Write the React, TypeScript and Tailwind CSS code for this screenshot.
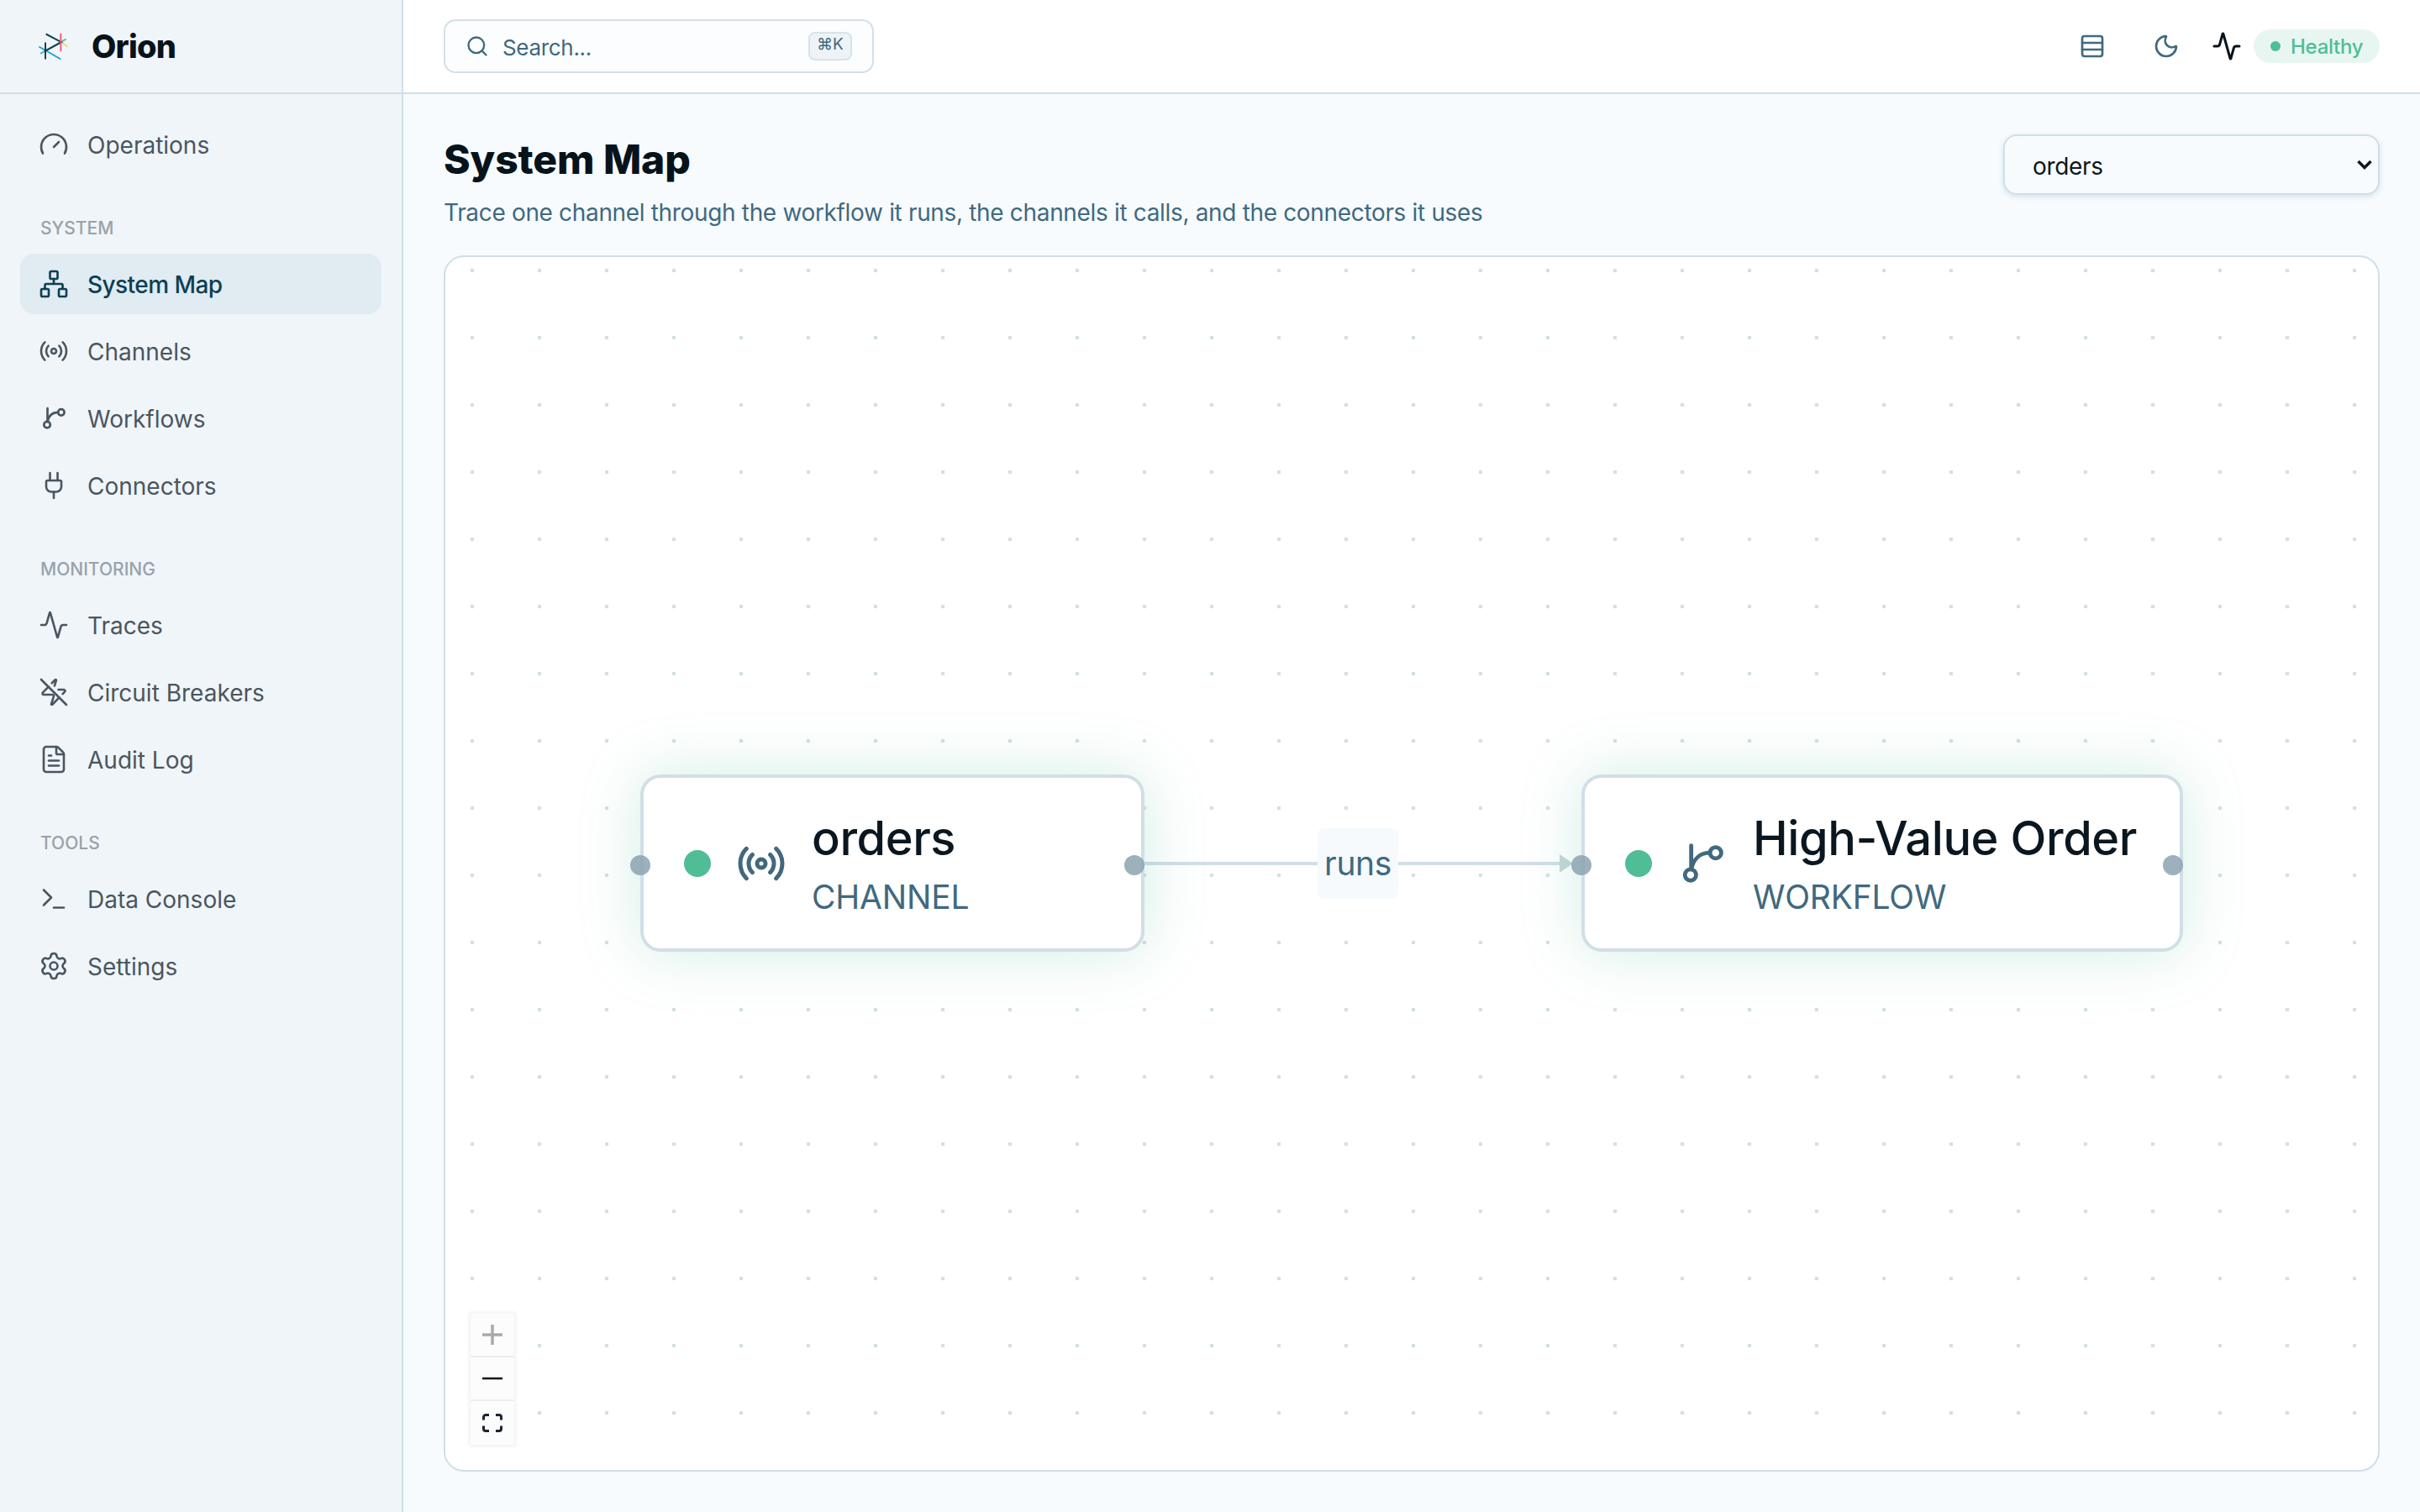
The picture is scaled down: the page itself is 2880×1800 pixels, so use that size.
import { Activity, FileText, Gauge, Moon, Network, Plug, Radio, Rows3, Search, Settings, Terminal, ZapOff } from "lucide-react"
import type { ReactNode } from "react"

function WorkflowIcon({ className }: { className?: string }) {
    return (
        <svg viewBox="0 0 24 24" fill="none" stroke="currentColor" strokeWidth="1.8" strokeLinecap="round" strokeLinejoin="round" className={className}>
            <path d="M7 4v10.600" />
            <path d="M7 14.600C8 10 11 7.200 15.400 7.200" />
            <circle cx="17.900" cy="7.200" r="2.500" />
            <circle cx="6.700" cy="17.100" r="2.500" />
        </svg>
    )
}

function Logo() {
    return (
        <svg viewBox="60 80 120 110" fill="none" strokeWidth="6" className="w-10 h-[37px] shrink-0">
            <path d="M70 135L148 180" stroke="#1ba3cf" />
            <path d="M75 160L167 108" stroke="#4fbd95" />
            <path d="M150 120L173 135" stroke="#f8d56f" />
            <path d="M95 90L150 119L90 152" stroke="#0f4254" />
            <path d="M93 120V180" stroke="#0f4254" />
            <path d="M148 88V152" stroke="#ef5b82" />
        </svg>
    )
}

function NavItem({ icon, label, active }: { icon: ReactNode; label: string; active?: boolean }) {
    return (
        <div className={`flex items-center gap-[22px] h-[72px] px-[22px] rounded-2xl text-[28px] ${active ? "bg-[#e1ebf2] text-[#0c4053] font-medium tracking-[-0.02em]" : "text-[#4a5660]"}`}>
            {icon}
            <span className="pt-[1px]">{label}</span>
        </div>
    )
}

function NavGroup({ title, children }: { title: string; children: ReactNode }) {
    return (
        <div className="mt-[46px]">
            <div className="h-8 mb-4 pl-6 pt-[3px] flex items-center text-[21px] font-medium uppercase text-[#99a2aa]">{title}</div>
            <div className="flex flex-col gap-2">{children}</div>
        </div>
    )
}

function Handle({ className }: { className: string }) {
    return <div className={`absolute top-[712px] w-6 h-6 rounded-full bg-[#8ba3af]/85 ${className}`} />
}

function GraphNode({ icon, name, type, className }: { icon: ReactNode; name: string; type: string; className: string }) {
    return (
        <div className={`absolute top-[616px] h-[211px] flex items-center pl-[48px] bg-white border-4 border-[#d0dfe7] rounded-[24px] shadow-[0_0_70px_rgba(79,189,149,0.25)] ${className}`}>
            <div className="w-8 h-8 rounded-full bg-[#4fbd95] shrink-0" />
            <div className="ml-7 w-16 h-16 flex items-center justify-center text-[#40697e] shrink-0">{icon}</div>
            <div className="ml-[28px]">
                <div className="text-[56px] leading-[68px] font-medium tracking-[-0.008em] text-[#0b1720]">{name}</div>
                <div className="mt-[13px] text-[39px] leading-[46px] tracking-[-0.005em] uppercase text-[#40697e]">{type}</div>
            </div>
        </div>
    )
}

export default function App() {
    return (
        <div className="flex h-screen overflow-hidden bg-[#f7fbfe] font-['Inter','DejaVu_Sans',sans-serif]">
            {/* Sidebar */}
            <aside className="w-[480px] shrink-0 flex flex-col bg-[#f0f5f9] border-r-2 border-[#d0dfe7]">
                <div className="h-[112px] shrink-0 flex items-center pl-[43px] border-b-2 border-[#d0dfe7]">
                    <Logo />
                    <span className="ml-[26px] text-[38px] font-extrabold tracking-[-0.02em] text-[#07131b]">Orion</span>
                </div>
                <nav className="px-6 pt-6">
                    <NavItem icon={<Gauge size={36} strokeWidth={1.75} />} label="Operations" />
                    <NavGroup title="System">
                        <NavItem active icon={<Network size={36} strokeWidth={1.75} />} label="System Map" />
                        <NavItem icon={<Radio size={36} strokeWidth={1.75} />} label="Channels" />
                        <NavItem icon={<WorkflowIcon className="w-9 h-9" />} label="Workflows" />
                        <NavItem icon={<Plug size={36} strokeWidth={1.75} />} label="Connectors" />
                    </NavGroup>
                    <NavGroup title="Monitoring">
                        <NavItem icon={<Activity size={36} strokeWidth={1.75} />} label="Traces" />
                        <NavItem icon={<ZapOff size={36} strokeWidth={1.75} />} label="Circuit Breakers" />
                        <NavItem icon={<FileText size={36} strokeWidth={1.75} />} label="Audit Log" />
                    </NavGroup>
                    <NavGroup title="Tools">
                        <NavItem icon={<Terminal size={36} strokeWidth={1.75} />} label="Data Console" />
                        <NavItem icon={<Settings size={36} strokeWidth={1.75} />} label="Settings" />
                    </NavGroup>
                </nav>
            </aside>

            <div className="flex-1 flex flex-col min-w-0">
                {/* Top bar */}
                <header className="h-[112px] shrink-0 flex items-center justify-between pl-12 pr-12 bg-white border-b-2 border-[#d0dfe7]">
                    <div className="w-[512px] h-16 flex items-center pl-6 pr-6 bg-[#fbfdfe] border-2 border-[#d2e0e8] rounded-[14px] text-[#40697e]">
                        <Search size={28} strokeWidth={2} />
                        <span className="ml-4 pt-[2px] text-[26px] tracking-[-0.012em]">Search...</span>
                        <kbd className="ml-auto w-[52px] h-[34px] flex items-center justify-center pb-1 bg-[#eef3f7] border-2 border-[#d6e3ea] rounded-lg text-[19px] font-['Inter','DejaVu_Sans',sans-serif]">⌘K</kbd>
                    </div>
                    <div className="flex items-center">
                        <Rows3 size={32} strokeWidth={2} className="text-[#40697e]" />
                        <Moon size={32} strokeWidth={2} className="ml-14 text-[#40697e]" />
                        <Activity size={36} strokeWidth={2} className="ml-[38px] text-[#07131b]" />
                        <div className="ml-[14px] w-[150px] h-10 flex items-center pl-5 gap-3 bg-[#e8f6f1] rounded-full text-[24px] font-medium tracking-[-0.012em] text-[#4fbd95]">
                            <span className="w-3 h-3 rounded-full bg-[#4fbd95] shrink-0" />
                            <span className="pt-[2px]">Healthy</span>
                        </div>
                    </div>
                </header>

                {/* Page */}
                <main className="flex-1 flex flex-col min-h-0 px-12 pt-12 pb-12">
                    <div className="flex items-start justify-between h-[144px] shrink-0">
                        <div>
                            <h1 className="text-[48px] leading-[60px] font-extrabold tracking-[-0.002em] text-[#07131b]">System Map</h1>
                            <p className="mt-[13px] text-[28px] leading-[40px] tracking-[-0.012em] text-[#40697e]">Trace one channel through the workflow it runs, the channels it calls, and the connectors it uses</p>
                        </div>
                        <div className="relative w-[448px] h-[72px]">
                            <select className="w-full h-full appearance-none pl-[33px] pt-[3px] bg-[#f7fbfe] border-2 border-[#d0dfe7] rounded-2xl shadow-[0_2px_6px_rgba(64,105,126,0.18)] text-[28px] tracking-[-0.012em] text-[#0b1720]">
                                <option>orders</option>
                            </select>
                            <svg viewBox="0 0 18 12" fill="none" stroke="#0b1720" strokeWidth="3.500" className="absolute right-[9px] top-[30px] w-[18px] h-3 pointer-events-none">
                                <path d="M1.500 2L9 9.500L16.500 2" />
                            </svg>
                        </div>
                    </div>

                    {/* Canvas */}
                    <div className="relative flex-1 min-h-0 overflow-hidden bg-white border-2 border-[#d0dfe7] rounded-[24px] bg-[radial-gradient(circle,#d3e0e8_2.2px,transparent_2.6px)] bg-[length:80px_80px] bg-[position:-8px_-24px]">
                        <svg className="absolute left-[832px] top-[706px] w-[512px] h-[32px]" viewBox="0 0 512 32" fill="none">
                            <path d="M0 16H496" stroke="#d0dfe7" strokeWidth="4" />
                            <path d="M494 5L510 16L494 27Z" fill="#c5d6dc" />
                        </svg>
                        <div className="absolute left-[1038px] top-[680px] w-24 h-[84px] flex items-center justify-center bg-[#f6fafd] rounded-lg text-[39px] tracking-[-0.01em] text-[#40697e]">runs</div>

                        <GraphNode className="left-[232px] w-[600px]" icon={<Radio className="w-[60px] h-[60px]" strokeWidth={2} />} name="orders" type="Channel" />
                        <GraphNode className="left-[1352px] w-[716px]" icon={<WorkflowIcon className="w-16 h-16" />} name="High-Value Order" type="Workflow" />

                        <Handle className="left-[220px]" />
                        <Handle className="left-[808px]" />
                        <Handle className="left-[1340px]" />
                        <Handle className="left-[2044px]" />

                        <div className="absolute left-[30px] bottom-[30px] w-[52px] flex flex-col gap-[2px] bg-[#eeeeee] shadow-[0_0_4px_2px_rgba(0,0,0,0.06)]">
                            <div className="h-[50px] flex items-center justify-center bg-[#fcfcfc]">
                                <svg viewBox="0 0 24 24" className="w-6 h-6" fill="none" stroke="#aaaaaa" strokeWidth="3.500"><path d="M12 0V24M0 12H24" /></svg>
                            </div>
                            <div className="h-[50px] flex items-center justify-center bg-[#fcfcfc]">
                                <svg viewBox="0 0 24 4" className="w-6 h-1" fill="none" stroke="#07131b" strokeWidth="2.600"><path d="M0 2H24" /></svg>
                            </div>
                            <div className="h-[52px] flex items-center justify-center bg-[#fcfcfc]">
                                <svg viewBox="0 0 24 22" className="w-6 h-[22px]" fill="none" stroke="#1a2430" strokeWidth="3"><path d="M8 1.500H4a2.500 2.500 0 0 0-2.500 2.500v3.500M16 1.500h4a2.500 2.500 0 0 1 2.500 2.500v3.500M1.500 14.500v3.500a2.500 2.500 0 0 0 2.500 2.500h4M22.500 14.500v3.500a2.500 2.500 0 0 1-2.500 2.500h-4" /></svg>
                            </div>
                        </div>
                    </div>
                </main>
            </div>
        </div>
    )
}
